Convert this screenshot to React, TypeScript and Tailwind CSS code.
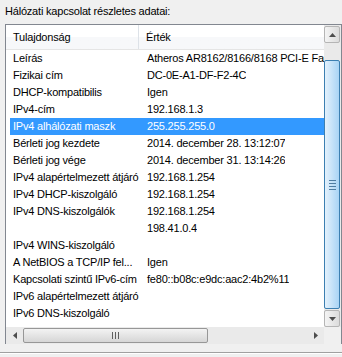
const rows: [string, string][] = [
  ['Leírás', 'Atheros AR8162/8166/8168 PCI-E Fast Ethernet Controller (NDIS 6.30)'],
  ['Fizikai cím', 'DC-0E-A1-DF-F2-4C'],
  ['DHCP-kompatibilis', 'Igen'],
  ['IPv4-cím', '192.168.1.3'],
  ['IPv4 alhálózati maszk', '255.255.255.0'],
  ['Bérleti jog kezdete', '2014. december 28. 13:12:07'],
  ['Bérleti jog vége', '2014. december 31. 13:14:26'],
  ['IPv4 alapértelmezett átjáró', '192.168.1.254'],
  ['IPv4 DHCP-kiszolgáló', '192.168.1.254'],
  ['IPv4 DNS-kiszolgálók', '192.168.1.254'],
  ['', '198.41.0.4'],
  ['IPv4 WINS-kiszolgáló', ''],
  ['A NetBIOS a TCP/IP fel...', 'Igen'],
  ['Kapcsolati szintű IPv6-cím', 'fe80::b08c:e9dc:aac2:4b2%11'],
  ['IPv6 alapértelmezett átjáró', ''],
  ['IPv6 DNS-kiszolgáló', ''],
]

const SELECTED = 4

function Arrow({ dir }: { dir: 'up' | 'down' | 'left' | 'right' }) {
  const pts = {
    up: '0,4 3.5,0 7,4',
    down: '0,0 3.5,4 7,0',
    left: '4,0 0,3.5 4,7',
    right: '0,0 4,3.5 0,7',
  }[dir]
  const vertical = dir === 'up' || dir === 'down'
  return (
    <svg width={vertical ? 7 : 4} height={vertical ? 4 : 7} viewBox={vertical ? '0 0 7 4' : '0 0 4 7'}>
      <polygon points={pts} fill="#4d4d4d" />
    </svg>
  )
}

function SbButton({ dir }: { dir: 'up' | 'down' }) {
  return (
    <div className="h-[17px] flex items-center justify-center border border-[#b5b5b5] rounded-[2px] bg-gradient-to-r from-[#f4f4f4] to-[#dcdcdc]">
      <Arrow dir={dir} />
    </div>
  )
}

export default function App() {
  return (
    <div
      className="w-[342px] h-[357px] bg-[#f0f0f0] flex flex-col text-[11px] tracking-[-0.2px] text-black overflow-hidden"
      style={{ fontFamily: '"Liberation Sans", Arial, sans-serif' }}
    >
      <div className="h-[24px] pl-[5px] pt-[5px] leading-[13px]">Hálózati kapcsolat részletes adatai:</div>

      <div className="ml-[5px] w-[337px] h-[320px] border border-[#828790] bg-white grid grid-cols-[318px_17px] grid-rows-[302px_17px]">
        {/* list area */}
        <div className="overflow-hidden flex flex-col">
          <div className="h-[25px] flex items-stretch border-b border-[#e5e5e5] bg-gradient-to-b from-white from-50% to-[#f7f8fa] to-50%">
            <div className="w-[133px] pl-[7px] flex items-center border-r border-[#dde2e8]">Tulajdonság</div>
            <div className="flex-1 pl-[7px] flex items-center">Érték</div>
          </div>
          <div className="flex flex-col pl-[4px]">
            {rows.map(([k, v], i) => (
              <div
                key={i}
                className={
                  'h-[17px] flex items-center whitespace-nowrap ' +
                  (i === SELECTED ? 'bg-[#3399ff] text-white' : '')
                }
              >
                <div className="w-[134px] shrink-0 pl-[3px] overflow-hidden">{k}</div>
                <div className="pl-[3px] overflow-hidden">{v}</div>
              </div>
            ))}
          </div>
        </div>

        {/* vertical scrollbar */}
        <div className="bg-[#eaeaea] flex flex-col pt-[1px] pr-[1px]">
          <SbButton dir="up" />
          <div className="flex-1 flex flex-col pt-[17px] pb-[1px]">
            <div className="flex-1 border border-[#3c7fb1] rounded-[2px] bg-gradient-to-r from-[#e3f1fc] to-[#a9d4f5] flex items-center justify-center">
              <div className="flex flex-col gap-[2px] w-[7px]">
                <div className="h-px bg-[#4f7da2]" />
                <div className="h-px bg-[#4f7da2]" />
                <div className="h-px bg-[#4f7da2]" />
                <div className="h-px bg-[#4f7da2]" />
              </div>
            </div>
          </div>
          <SbButton dir="down" />
        </div>

        {/* horizontal scrollbar */}
        <div className="bg-[#eaeaea] flex items-stretch">
          <div className="w-[17px] flex items-center justify-center">
            <Arrow dir="left" />
          </div>
          <div className="w-[185px] my-[1px] border border-[#979797] rounded-[2px] bg-gradient-to-b from-[#f3f3f3] to-[#d6d6d6] flex items-center justify-center">
            <div className="flex gap-[2px] h-[7px]">
              <div className="w-px bg-[#606060]" />
              <div className="w-px bg-[#606060]" />
              <div className="w-px bg-[#606060]" />
            </div>
          </div>
          <div className="flex-1" />
          <div className="w-[17px] flex items-center justify-center">
            <Arrow dir="right" />
          </div>
        </div>
        <div className="bg-[#f0f0f0]" />
      </div>

      <div className="mt-[8px] h-px bg-[#a0a0a0]" />
      <div className="h-px bg-white" />
    </div>
  )
}
